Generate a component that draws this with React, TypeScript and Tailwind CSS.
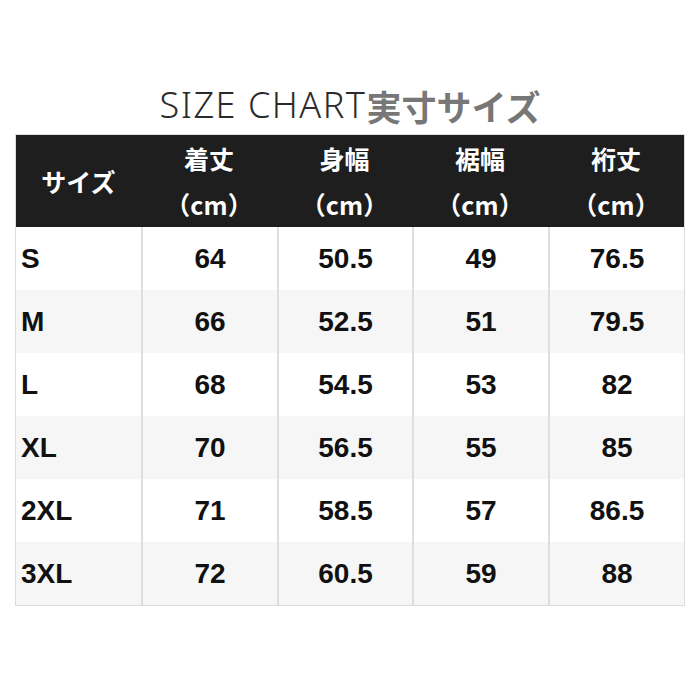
const headers = [
  { label: 'サイズ', unit: false },
  { label: '着丈', unit: true },
  { label: '身幅', unit: true },
  { label: '裾幅', unit: true },
  { label: '裄丈', unit: true },
];

const rows = [
  ['S', '64', '50.5', '49', '76.5'],
  ['M', '66', '52.5', '51', '79.5'],
  ['L', '68', '54.5', '53', '82'],
  ['XL', '70', '56.5', '55', '85'],
  ['2XL', '71', '58.5', '57', '86.5'],
  ['3XL', '72', '60.5', '59', '88'],
];

const cols = 'grid grid-cols-[125px_136px_135px_136px_136px]';

export default function App() {
  return (
    <div className="w-[700px] h-[700px] bg-white flex flex-col items-center pt-[80px]">
      <h1 className="h-[50px] flex items-center leading-none">
        <span className="text-[36px] font-light tracking-[1.5px] text-[#2b2b2b] font-['Noto_Sans',sans-serif]">SIZE CHART</span>
        <span className="text-[35px] font-bold text-[#777777] font-['Noto_Sans_CJK_JP',sans-serif]">実寸サイズ</span>
      </h1>
      <div className="mt-[4px] w-[670px] border border-[#dcdcdc] font-['Liberation_Sans','Noto_Sans_CJK_JP',sans-serif]">
        <div className={`${cols} h-[92px] bg-[#1e1e1e] text-white font-['Noto_Sans_CJK_JP',sans-serif] font-bold`}>
          {headers.map((h) => (
            <div key={h.label} className="flex flex-col items-center justify-center">
              <div className="text-[25px] leading-[46px]">{h.label}</div>
              {h.unit && <div className="text-[25px] leading-[46px]">（cm）</div>}
            </div>
          ))}
        </div>
        {rows.map((r, i) => (
          <div key={r[0]} className={`${cols} h-[63px] ${i % 2 === 1 ? 'bg-[#f6f6f6]' : 'bg-white'}`}>
            {r.map((v, j) => (
              <div
                key={j}
                className={`flex items-center text-[28px] font-bold text-[#111111] ${
                  j === 0 ? 'justify-start pl-[5px]' : 'justify-center border-l-2 border-[#dedede]'
                }`}
              >
                {v}
              </div>
            ))}
          </div>
        ))}
      </div>
    </div>
  );
}
